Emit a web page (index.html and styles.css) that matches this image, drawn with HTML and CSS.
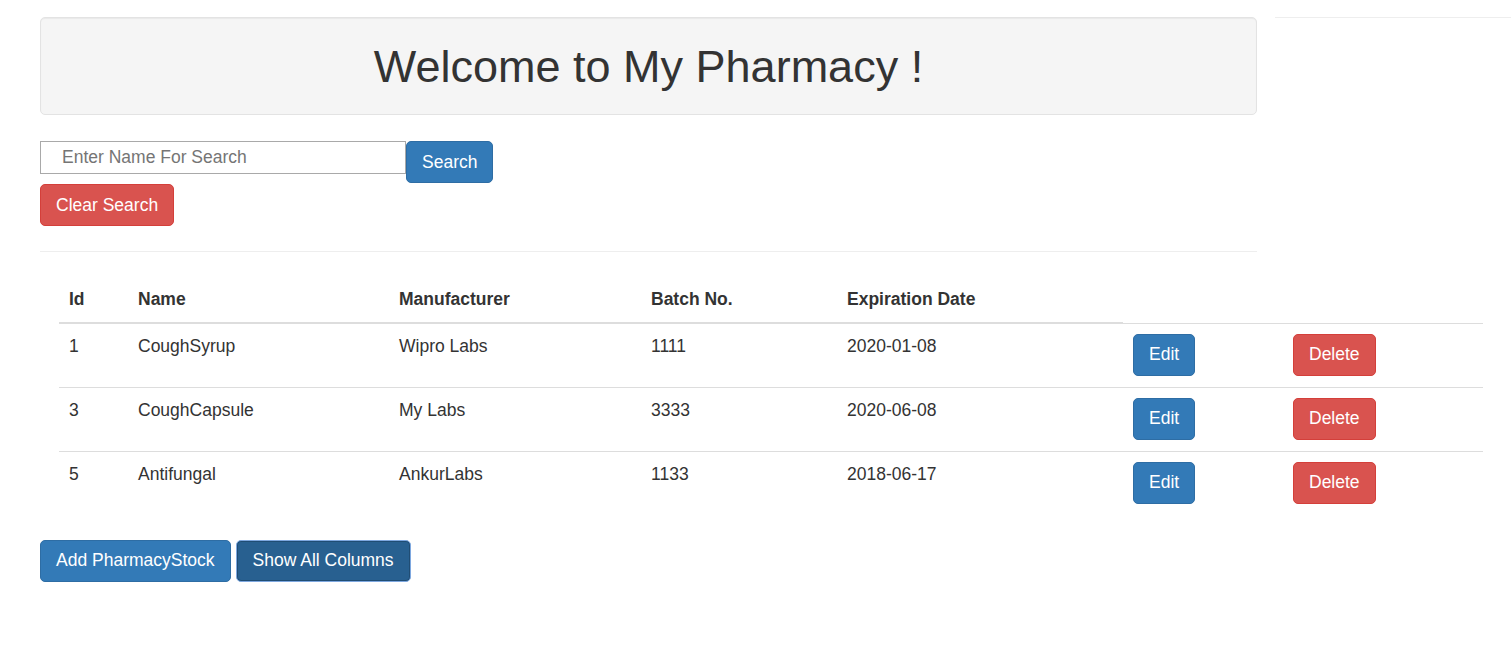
FILE: index.html
```html
<!DOCTYPE html>
<html>
<head>
<meta charset="utf-8">
<title>My Pharmacy</title>
<link rel="stylesheet" href="styles.css">
</head>
<body>
<div class="top">
  <div class="main">
    <div class="well">
      <h1>Welcome to My Pharmacy !</h1>
    </div>
    <div class="search-row">
      <input class="search-input" type="text" placeholder="Enter Name For Search">
      <button class="btn btn-primary">Search</button>
    </div>
    <div class="clear-row">
      <button class="btn btn-danger">Clear Search</button>
    </div>
    <hr class="divider">
  </div>
  <div class="side"></div>
</div>
<table class="stock">
  <colgroup>
    <col class="c-id"><col class="c-name"><col class="c-man"><col class="c-batch"><col class="c-exp"><col class="c-edit"><col class="c-del">
  </colgroup>
  <thead>
    <tr>
      <th>Id</th><th>Name</th><th>Manufacturer</th><th>Batch No.</th><th>Expiration Date</th>
    </tr>
  </thead>
  <tbody>
    <tr>
      <td>1</td><td>CoughSyrup</td><td>Wipro Labs</td><td>1111</td><td>2020-01-08</td>
      <td><button class="btn btn-primary">Edit</button></td>
      <td><button class="btn btn-danger">Delete</button></td>
    </tr>
    <tr>
      <td>3</td><td>CoughCapsule</td><td>My Labs</td><td>3333</td><td>2020-06-08</td>
      <td><button class="btn btn-primary">Edit</button></td>
      <td><button class="btn btn-danger">Delete</button></td>
    </tr>
    <tr>
      <td>5</td><td>Antifungal</td><td>AnkurLabs</td><td>1133</td><td>2018-06-17</td>
      <td><button class="btn btn-primary">Edit</button></td>
      <td><button class="btn btn-danger">Delete</button></td>
    </tr>
  </tbody>
</table>
<div class="actions">
  <button class="btn btn-primary">Add PharmacyStock</button>
  <button class="btn btn-active">Show All Columns</button>
</div>
</body>
</html>
```

FILE: styles.css
```css
* { box-sizing: border-box; }
html, body { margin: 0; background: #fff; }
body {
  padding: 17px 0 0 40px;
  font-family: "Liberation Sans", Arial, Helvetica, sans-serif;
  font-size: 17.5px;
  line-height: 25px;
  color: #333;
}
.top { display: flex; align-items: flex-start; }
.main { width: 1217px; flex: none; }
.side { flex: 1; margin-left: 18px; border-top: 1px solid #eee; }
.well {
  background: #f5f5f5;
  border: 1px solid #e3e3e3;
  border-radius: 5px;
  box-shadow: inset 0 1px 1px rgba(0,0,0,0.05);
  padding: 23px;
  height: 98px;
}
.well h1 {
  margin: 0;
  font-size: 45px;
  line-height: 52px;
  font-weight: 500;
  text-align: center;
  color: #333;
}
.search-row { display: flex; align-items: flex-start; margin-top: 26px; }
.search-input {
  width: 366px;
  height: 33px;
  border: 1px solid #a9a9a9;
  border-radius: 0;
  padding: 0 21px;
  font-family: inherit;
  font-size: 17.5px;
  color: #333;
  outline: none;
}
.search-input::placeholder { color: #757575; }
.clear-row { margin-top: 1px; }
.btn {
  display: inline-block;
  font-family: inherit;
  font-size: 17.5px;
  line-height: 25px;
  padding: 7.5px 15px;
  border: 1px solid transparent;
  border-radius: 5px;
  color: #fff;
  cursor: pointer;
  white-space: nowrap;
  vertical-align: middle;
}
.btn-primary { background: #337ab7; border-color: #2e6da4; }
.btn-danger { background: #d9534f; border-color: #d43f3a; }
.btn-active {
  background: #286090;
  border-color: #7ea8e0;
  box-shadow: inset 0 0 0 1px #204d74;
  padding: 7.5px 16px;
}
.divider { border: 0; border-top: 1px solid #eee; margin: 25px 0 0; height: 0; }
.stock {
  margin: 25px 0 0 19px;
  border-collapse: collapse;
  border-spacing: 0;
  table-layout: fixed;
  width: 1424px;
}
.c-id { width: 69px; }
.c-name { width: 261px; }
.c-man { width: 252px; }
.c-batch { width: 196px; }
.c-exp { width: 286px; }
.c-edit { width: 160px; }
.c-del { width: 200px; }
.stock th {
  text-align: left;
  font-weight: bold;
  padding: 10px;
  vertical-align: bottom;
  border-bottom: 2px solid #ddd;
}
.stock td {
  padding: 10px 10px 11px;
  vertical-align: top;
  border-top: 1px solid #ddd;
}
.actions { margin-top: 25px; display: flex; gap: 5px; }
```
